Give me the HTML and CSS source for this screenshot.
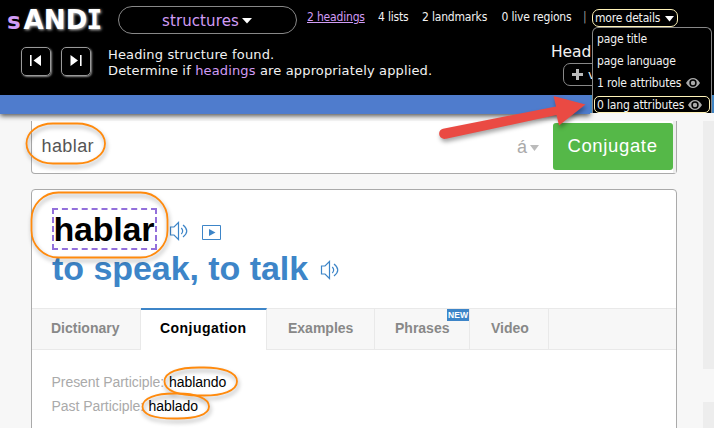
FILE: index.html
```html
<!DOCTYPE html>
<html lang="en">
<head>
<meta charset="utf-8">
<title>sANDI - hablar</title>
<link rel="stylesheet" href="styles.css">
</head>
<body>
<svg class="defs" width="0" height="0">
  <symbol id="eye" viewBox="0 0 14 10"><path fill="#aaa" fill-rule="evenodd" d="M0 5Q3 0 7 0T14 5Q11 10 7 10T0 5ZM7 1.3A3.7 3.7 0 1 0 7 8.7 3.7 3.7 0 1 0 7 1.3ZM7 2.8A2.2 2.2 0 1 1 7 7.2 2.2 2.2 0 1 1 7 2.8Z"/></symbol>
  <symbol id="speaker" viewBox="0 0 20 20"><g fill="none" stroke="#3d85c8" stroke-width="1.2"><path d="M1.500 6H5L9.500 1.500V18.500L5 14H1.500Z"/><path d="M12.300 7Q15 10 12.300 13M14 4Q21.500 10 14 16"/></g></symbol>
</svg>
<header class="andi">
  <div class="row-top">
    <div class="logo"><span class="s">s</span><span class="name">AND<span class="i">I</span></span></div>
    <button class="module"><span class="module-text">structures</span><svg width="10" height="6" viewBox="0 0 10 6"><path fill="#fff" d="M0 0H10L5 5.5Z"/></svg></button>
    <nav class="links">
      <span class="link on">2 headings</span><span class="link l2">4 lists</span><span class="link l3">2 landmarks</span><span class="link l4">0 live regions</span><span class="bar">|</span>
      <span class="more"><span class="more-text">more details</span><svg width="9" height="6" viewBox="0 0 9 6"><path fill="#fff" d="M0 0H9L4.5 5.5Z"/></svg></span>
    </nav>
  </div>
  <div class="row-info">
    <div class="step"><svg width="12" height="12" viewBox="0 0 12 12"><path fill="#fff" d="M0 0H1.6V11H0ZM11 0V11L3.5 5.5Z"/></svg></div>
    <div class="step second"><svg width="12" height="12" viewBox="0 0 12 12"><path fill="#fff" d="M10 0H11.6V11H10ZM.5 0V11L8 5.5Z"/></svg></div>
    <div class="message"><div class="m1">Heading structure found.</div><div class="m2">Determine if <em>headings</em> are appropriately applied.</div></div>
    <div class="info-side"><div class="side-title">Head</div><div class="view"><svg width="11" height="11" viewBox="0 0 11 11"><path fill="#bbb" d="M4 0H7V4H11V7H7V11H4V7H0V4H4Z"/></svg><span>v</span></div></div>
  </div>
  <div class="dropdown">
    <div class="item"><span class="d1">page title</span></div>
    <div class="item"><span class="d2">page language</span></div>
    <div class="item"><span class="d3">1 role attributes</span><svg width="14" height="10"><use href="#eye"/></svg></div>
    <div class="item focus"><span class="d4">0 lang attributes</span><svg width="14" height="10"><use href="#eye"/></svg></div>
  </div>
</header>
<div class="site-bar"><div class="bar-main"></div><div class="bar-end"></div></div>
<div class="page">
  <main class="main">
    <div class="search"><span class="query">hablar</span><span class="accent">á</span><svg class="caret" width="9" height="6" viewBox="0 0 9 6"><path fill="#bbb" d="M0 0H9L4.5 6Z"/></svg><button class="go">Conjugate</button><span class="search-end"></span></div>
    <section class="card">
      <div class="head">
        <div class="line"><h1>hablar</h1><svg class="spk1" width="20" height="20"><use href="#speaker"/></svg><svg class="play" width="20" height="16" viewBox="0 0 20 16"><path fill="none" stroke="#3d85c8" d="M.5.5H18.500V14.500H.5Z"/><path fill="#3d85c8" d="M7 4L13.500 7.500 7 11Z"/></svg></div>
        <div class="line"><h2>to speak, to talk</h2><svg class="spk2" width="20" height="20"><use href="#speaker"/></svg></div>
      </div>
      <nav class="tabs"><div class="tab t1"><span>Dictionary</span></div><div class="tab t2"><span>Conjugation</span></div><div class="tab t3"><span>Examples</span></div><div class="tab t4"><span>Phrases</span><b class="new">NEW</b></div><div class="tab t5"><span>Video</span></div><div class="rest"></div></nav>
      <div class="forms"><div><span class="f1">Present Participle:</span><strong>hablando</strong></div><div><span class="f2">Past Participle:</span><strong>hablado</strong></div></div>
    </section>
  </main>
  <aside class="side"><div class="ad"></div><div class="ad low"></div></aside>
</div>
<svg class="marks" width="714" height="428" viewBox="0 0 714 428">
  <g fill="none" stroke="#ff8a0d" stroke-width="1.8">
    <path d="M53 123.500H77C92 123.500 105 132 105 143.500S92 163.500 77 163.500H53C38 163.500 26.500 155 26.500 143.500S38 123.500 53 123.500Z"/>
    <rect x="31.500" y="192.500" width="136" height="65" rx="27"/>
    <path d="M199 367.500H204C222 367.500 237 372 237 381.500S222 395.500 204 395.500H199C179 395.500 164.500 391 164.500 381.500S179 367.500 199 367.500Z"/>
    <path d="M174 393.500H178C195 393.500 209 398 209 406.500S195 418.500 178 418.500H174C156 418.500 142.500 415 142.500 406.500S156 393.500 174 393.500Z"/>
  </g>
  <path class="arrow" fill="#ea4a43" d="M443 128.700L556 106.500 553.500 96 585.500 104.500 559 125.500 556.500 115 446 138.800C438 140 437 130 443 128.700Z"/>
</svg>
</body>
</html>
```

FILE: styles.css
```css
* { box-sizing: border-box; }
body { margin: 0; width: 714px; height: 428px; overflow: hidden; background: #f7f7f7; font-family: "Liberation Sans", sans-serif; position: relative; }
.defs { position: absolute; }
svg { flex: none; display: block; }
button { padding: 0; border: 0; font: inherit; }
span, em, h1, h2 { white-space: nowrap; }

.andi { height: 95px; background: #000; color: #f2f2f2; font-family: "DejaVu Sans", sans-serif; position: relative; z-index: 2; }
.row-top { height: 40px; display: flex; align-items: flex-start; }
.logo { width: 118px; padding-left: 7px; display: flex; line-height: 38px; font-weight: bold; }
.s { color: #d19cf5; font-size: 23px; width: 16.500px; padding-top: 2px; }
.name { color: #fff; font-size: 26px; letter-spacing: .2px; padding-top: 1px; text-shadow: 1px 1px 3px #ccc; }
.i { font-family: "DejaVu Sans Mono", monospace; letter-spacing: 0; margin-left: -1px; }
.module { width: 179px; height: 28px; margin-top: 6px; border: 1px solid #888; border-radius: 14px; background: #000; color: #d19cf5; font-size: 15px; letter-spacing: .1px; display: flex; align-items: center; padding-left: 43px; gap: 3px; }
.module-text { padding-top: 1px; }
.module svg { margin-top: 2px; }
.links { font-family: "DejaVu Sans Condensed", "DejaVu Sans", sans-serif; font-stretch: condensed; font-size: 12px; letter-spacing: -.18px; display: flex; line-height: 17px; padding: 9px 0 0 10px; }
.link { height: 17px; width: 71px; }
.link.on { color: #d19cf5; text-decoration: underline; }
.l2 { width: 44px; }
.l3 { width: 79.500px; }
.l4 { width: 81.500px; }
.bar { width: 9px; color: #999; }
.more { width: 86px; height: 18px; border: 1px solid #fff3b8; border-radius: 7px; display: flex; align-items: center; padding: 0 3px 0 2px; justify-content: space-between; }
.more svg { margin-top: 2px; }
.row-info { display: flex; padding: 6px 0 0 21px; }
.step { width: 30px; height: 29px; border: 1px solid #999; border-radius: 5px; box-shadow: 1px 1px 2px #888; display: flex; padding: 7px 0 0 8px; margin-top: 1px; margin-right: 10px; }
.message { width: 443px; flex: none; padding: 1px 0 0 7px; font-size: 13px; letter-spacing: .15px; line-height: 16px; }
.message em { color: #d19cf5; font-style: normal; }
.info-side { font-size: 15.500px; letter-spacing: -.1px; line-height: 18px; width: 48px; margin: -3px 0 0 7px; }
.view { width: 50px; height: 23px; margin: 2px 0 0 12px; border: 1px solid #888; border-radius: 7px; display: flex; align-items: center; padding-left: 8px; gap: 5px; font-size: 13px; }
.side-title { height: 18px; }
.dropdown { position: absolute; left: 592px; top: 27px; width: 120px; height: 86px; background: #000; border: 1px solid #888; border-bottom: 0; border-radius: 6px 6px 0 0; padding-top: 1px; font-family: "DejaVu Sans Condensed", "DejaVu Sans", sans-serif; font-stretch: condensed; font-size: 12px; letter-spacing: -.15px; }
.item { height: 22px; padding-left: 4px; display: flex; align-items: center; gap: 5px; line-height: 18px; padding-bottom: 2px; }
.focus { height: 17px; margin: 1px 1px 0; padding: 0 0 0 2px; border: 1px solid #fff3b8; border-radius: 5px; gap: 4px; }
.site-bar { height: 19px; position: relative; z-index: 1; display: flex; align-items: flex-start; }
.bar-main { width: 590px; height: 19px; background: #4f7ccd; box-shadow: 0 2px 5px #555; }
.bar-end { flex: 1; height: 18px; background: #4085c4; }

.page { display: flex; justify-content: space-between; height: 314px; padding: 7px 0 0 31px; }
.main { width: 646px; }
.search { height: 53px; background: #fff; border: 1px solid #aaa; border-top: 0; border-radius: 0 0 4px 4px; display: flex; align-items: flex-start; font-size: 18px; line-height: 49px; color: #555; }
.query { width: 485px; padding-left: 9.500px; letter-spacing: .4px; padding-top: 1px; }
.accent { color: #aaa; width: 13px; padding-top: 2px; }
.caret { margin-top: 24px; }
.go { margin: 2px 0 0 14px; width: 120px; height: 47px; border-radius: 3px; background: #55b848; color: #fff; font-size: 18.500px; letter-spacing: .65px; line-height: 46px; padding: 0 1px 1px 0; }
.search-end { width: 3px; height: 52px; background: #eee; }
.card { height: 260px; margin-top: 15px; background: #fff; border: 1px solid #aaa; border-radius: 4px 4px 0 0; }
.head { height: 118px; padding: 18px 0 0 20px; }
.line { display: flex; height: 42px; }
h1, h2 { margin: 0; font-size: 34px; line-height: 38px; }
h1 { width: 105px; height: 42px; border: 2px dashed #9370db; color: #000; letter-spacing: -.2px; text-indent: -.5px; }
h2 { color: #3d85c8; width: 268px; line-height: 37px; letter-spacing: -.05px; }
.spk1 { margin: 13px 0 0 12px; }
.play { margin: 17px 0 0 13px; }
.spk2 { margin-top: 10px; }
.tabs { display: flex; height: 42px; font-size: 14px; font-weight: bold; color: #888; line-height: 39px; }
.tab { background: #f7f7f7; border: 1px solid #e9e9e9; border-left: 0; display: flex; position: relative; }
.t1 { width: 109px; padding-left: 19px; }
.t2 { width: 126px; padding-left: 19px; background: #fff; border-top: 2px solid #3d85c8; border-bottom: 0; color: #000; line-height: 37px; letter-spacing: .45px; }
.t3 { width: 108px; padding-left: 21px; }
.t4 { width: 95px; padding-left: 20px; }
.t5 { width: 79px; padding-left: 21px; }
.rest { flex: 1; background: #f7f7f7; border: solid #e9e9e9; border-width: 1px 0; }
.new { position: absolute; top: 0; right: 0; width: 22px; height: 12px; background: #3d85c8; color: #fff; font-size: 8.500px; line-height: 12px; text-align: center; }
.forms { padding: 20px 0 0 19.500px; font-size: 14px; line-height: 24px; color: #aaa; letter-spacing: -.05px; }
.forms div { display: flex; height: 24px; }
.forms strong { font-weight: normal; color: #000; }
.f1 { width: 117.500px; }
.f2 { width: 97px; }
.side { width: 11px; }
.ad { height: 248px; background: #ededed; }
.low { height: 26px; margin-top: 33px; }
.marks { position: absolute; left: 0; top: 0; z-index: 5; filter: drop-shadow(1px 3px 2px rgba(0,0,0,.35)); }
```
